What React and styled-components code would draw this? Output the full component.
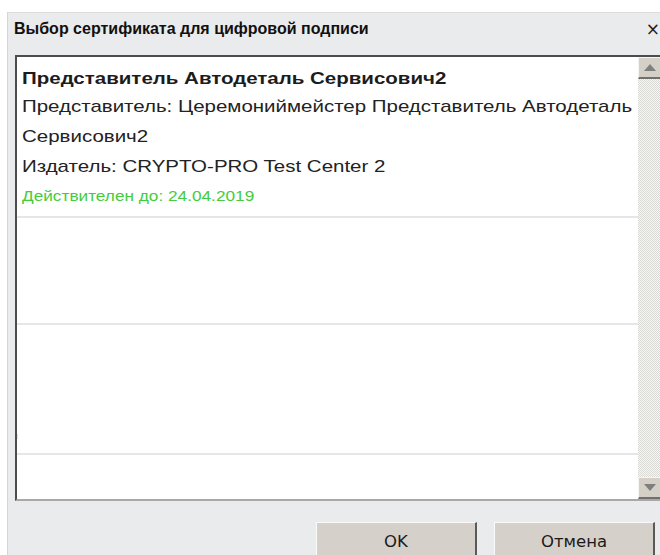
import React from "react";
import styled, { createGlobalStyle } from "styled-components";

const Global = createGlobalStyle`
  html, body { margin: 0; padding: 0; background: #ffffff; overflow: hidden; }
  body { font-family: "Liberation Sans", Arial, sans-serif; }
`;

const Page = styled.div`
  width: 660px;
  height: 555px;
  overflow: hidden;
  padding-top: 12px;
  padding-left: 7px;
  box-sizing: border-box;
`;

const Dialog = styled.div`
  width: 700px;
  height: 560px;
  background: #eaebec;
  border-top: 1px solid #dcdcdc;
  border-left: 1px solid #d6d6d6;
  box-sizing: border-box;
  display: flex;
  flex-direction: column;
`;

const TitleBar = styled.div`
  height: 42px;
  display: flex;
  align-items: flex-start;
  padding: 7px 0 0 6px;
  width: 652px;
  box-sizing: border-box;
  justify-content: space-between;
`;

const Title = styled.div`
  font-family: "Liberation Sans", Arial, sans-serif;
  font-weight: bold;
  font-size: 16px;
  line-height: 18px;
  color: #111;
`;

const Close = styled.span`
  font-family: "DejaVu Sans", sans-serif;
  font-size: 17px;
  line-height: 18px;
  color: #222;
`;

const ListBox = styled.div`
  margin-left: 7px;
  width: 660px;
  height: 446px;
  background: #fff;
  border-top: 2px solid #4c4c4c;
  border-left: 2px solid #4c4c4c;
  border-bottom: 2px solid #a8a8a8;
  box-sizing: border-box;
  display: flex;
`;

const Items = styled.div`
  width: 621px;
  flex: none;
  overflow: hidden;
  display: flex;
  flex-direction: column;
`;

const Item = styled.div`
  height: ${(p) => p.$h}px;
  flex: none;
  box-sizing: border-box;
  border-bottom: 2px solid #e6e6e6;
  padding: 12px 0 0 5px;
  position: relative;
`;

/* certificate text is drawn in a wide face: stretch Arial metrics horizontally */
const Details = styled.div`
  transform: scaleX(1.205);
  transform-origin: left top;
  white-space: nowrap;
`;

const Name = styled.div`
  font-weight: bold;
  font-size: 17px;
  line-height: 20px;
  color: #1c1c1c;
  margin-bottom: 3px;
`;

const Line = styled.div`
  font-size: 17px;
  line-height: 30px;
  color: #222;
`;

const Valid = styled.div`
  font-size: 14.3px;
  line-height: 22px;
  color: #45cc3c;
  margin-top: 3px;
`;

const Caret = styled.span`
  position: absolute;
  left: 0;
  bottom: 14px;
  width: 1px;
  height: 5px;
  background: #f2e98a;
`;

const ScrollBar = styled.div`
  width: 24px;
  flex: none;
  display: flex;
  flex-direction: column;
  background-color: #f2f2f2;
  background-image: repeating-conic-gradient(#d9d9d6 0 25%, #f6f6f4 0 50%);
  background-size: 2px 2px;
`;

const ArrowButton = styled.div`
  height: 22px;
  flex: none;
  background: #d4d0c8;
  border-top: 1px solid #f4f4f0;
  border-left: 1px solid #f4f4f0;
  border-right: 1px solid #808080;
  border-bottom: 2px solid #707070;
  box-sizing: border-box;
  display: flex;
  align-items: center;
  justify-content: center;
`;

const Track = styled.div`
  flex: 1;
`;

const Footer = styled.div`
  display: flex;
  gap: 17px;
  padding: 21px 0 0 308px;
`;

const Button = styled.button`
  width: 161px;
  height: 40px;
  background: #d5d1ca;
  border: none;
  border-top: 1px solid #fafafa;
  border-left: 1px solid #fafafa;
  border-right: 2px solid #5a5a5a;
  box-sizing: border-box;
  font-family: "DejaVu Sans", Tahoma, sans-serif;
  font-size: 16.5px;
  color: #1a1a1a;
  padding: 0 0 2px;
  margin: 0;
`;

const Tri = ({ down }) => (
  <svg width="12" height="7" viewBox="0 0 12 7">
    <polygon
      points={down ? "0,0 12,0 6,7" : "0,7 12,7 6,0"}
      fill="#7f7f7f"
    />
  </svg>
);

export default function App() {
  return (
    <Page>
      <Global />
      <Dialog>
        <TitleBar>
          <Title>Выбор сертификата для цифровой подписи</Title>
          <Close>×</Close>
        </TitleBar>
        <ListBox>
          <Items>
            <Item $h={161}>
              <Details>
                <Name>Представитель Автодеталь Сервисович2</Name>
                <Line>Представитель: Церемониймейстер Представитель Автодеталь</Line>
                <Line>Сервисович2</Line>
                <Line>Издатель: CRYPTO-PRO Test Center 2</Line>
                <Valid>Действителен до: 24.04.2019</Valid>
              </Details>
            </Item>
            <Item $h={107} />
            <Item $h={130}>
              <Caret />
            </Item>
            <Item $h={60} />
          </Items>
          <ScrollBar>
            <ArrowButton>
              <Tri />
            </ArrowButton>
            <Track />
            <ArrowButton>
              <Tri down />
            </ArrowButton>
          </ScrollBar>
        </ListBox>
        <Footer>
          <Button>OK</Button>
          <Button>Отмена</Button>
        </Footer>
      </Dialog>
    </Page>
  );
}
